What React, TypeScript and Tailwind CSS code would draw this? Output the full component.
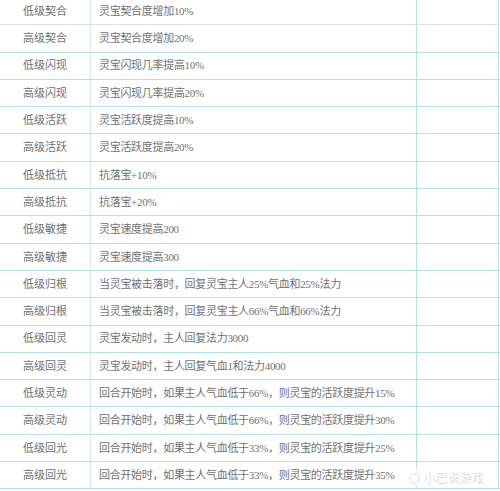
const rows: [string, string][] = [
  ["低级契合", "灵宝契合度增加10%"],
  ["高级契合", "灵宝契合度增加20%"],
  ["低级闪现", "灵宝闪现几率提高10%"],
  ["高级闪现", "灵宝闪现几率提高20%"],
  ["低级活跃", "灵宝活跃度提高10%"],
  ["高级活跃", "灵宝活跃度提高20%"],
  ["低级抵抗", "抗落宝+10%"],
  ["高级抵抗", "抗落宝+20%"],
  ["低级敏捷", "灵宝速度提高200"],
  ["高级敏捷", "灵宝速度提高300"],
  ["低级归根", "当灵宝被击落时，回复灵宝主人25%气血和25%法力"],
  ["高级归根", "当灵宝被击落时，回复灵宝主人66%气血和66%法力"],
  ["低级回灵", "灵宝发动时，主人回复法力3000"],
  ["高级回灵", "灵宝发动时，主人回复气血1和法力4000"],
  ["低级灵动", "回合开始时，如果主人气血低于66%，则灵宝的活跃度提升15%"],
  ["高级灵动", "回合开始时，如果主人气血低于66%，则灵宝的活跃度提升30%"],
  ["低级回光", "回合开始时，如果主人气血低于33%，则灵宝的活跃度提升25%"],
  ["高级回光", "回合开始时，如果主人气血低于33%，则灵宝的活跃度提升35%"],
];

export default function App() {
  return (
    <div className="w-[500px] h-[491px] overflow-hidden bg-white relative font-['Liberation_Serif','Noto_Sans_CJK_SC',serif] text-[11px] text-[#707070]">
      <div className="-mt-[2px] w-[500px]">
        {rows.map(([name, desc], i) => (
          <div
            key={name}
            className={
              "grid grid-cols-[91px_326px_82px] h-[27.3px] border-b " +
              (i === 0 ? "border-[#dedede]" : "border-[#b3e2e4]")
            }
          >
            <div className="flex items-center justify-center border-r border-[#dcebee] whitespace-nowrap">{name}</div>
            <div className="flex items-center pl-[8px] border-r border-[#b3e2e4] whitespace-nowrap tracking-[-0.3px]">{desc}</div>
            <div className="border-r border-[#b3e2e4]"></div>
          </div>
        ))}
      </div>
      <div className="absolute right-[4px] bottom-[4px] flex items-center gap-1 bg-white/85 px-3 h-[18px] text-[#dedede] text-[12px]">
        <span className="w-[11px] h-[11px] rounded-full border border-[#dedede]"></span>
        <span className="font-['Noto_Sans_CJK_SC',sans-serif]">小巴说游戏</span>
      </div>
    </div>
  );
}
